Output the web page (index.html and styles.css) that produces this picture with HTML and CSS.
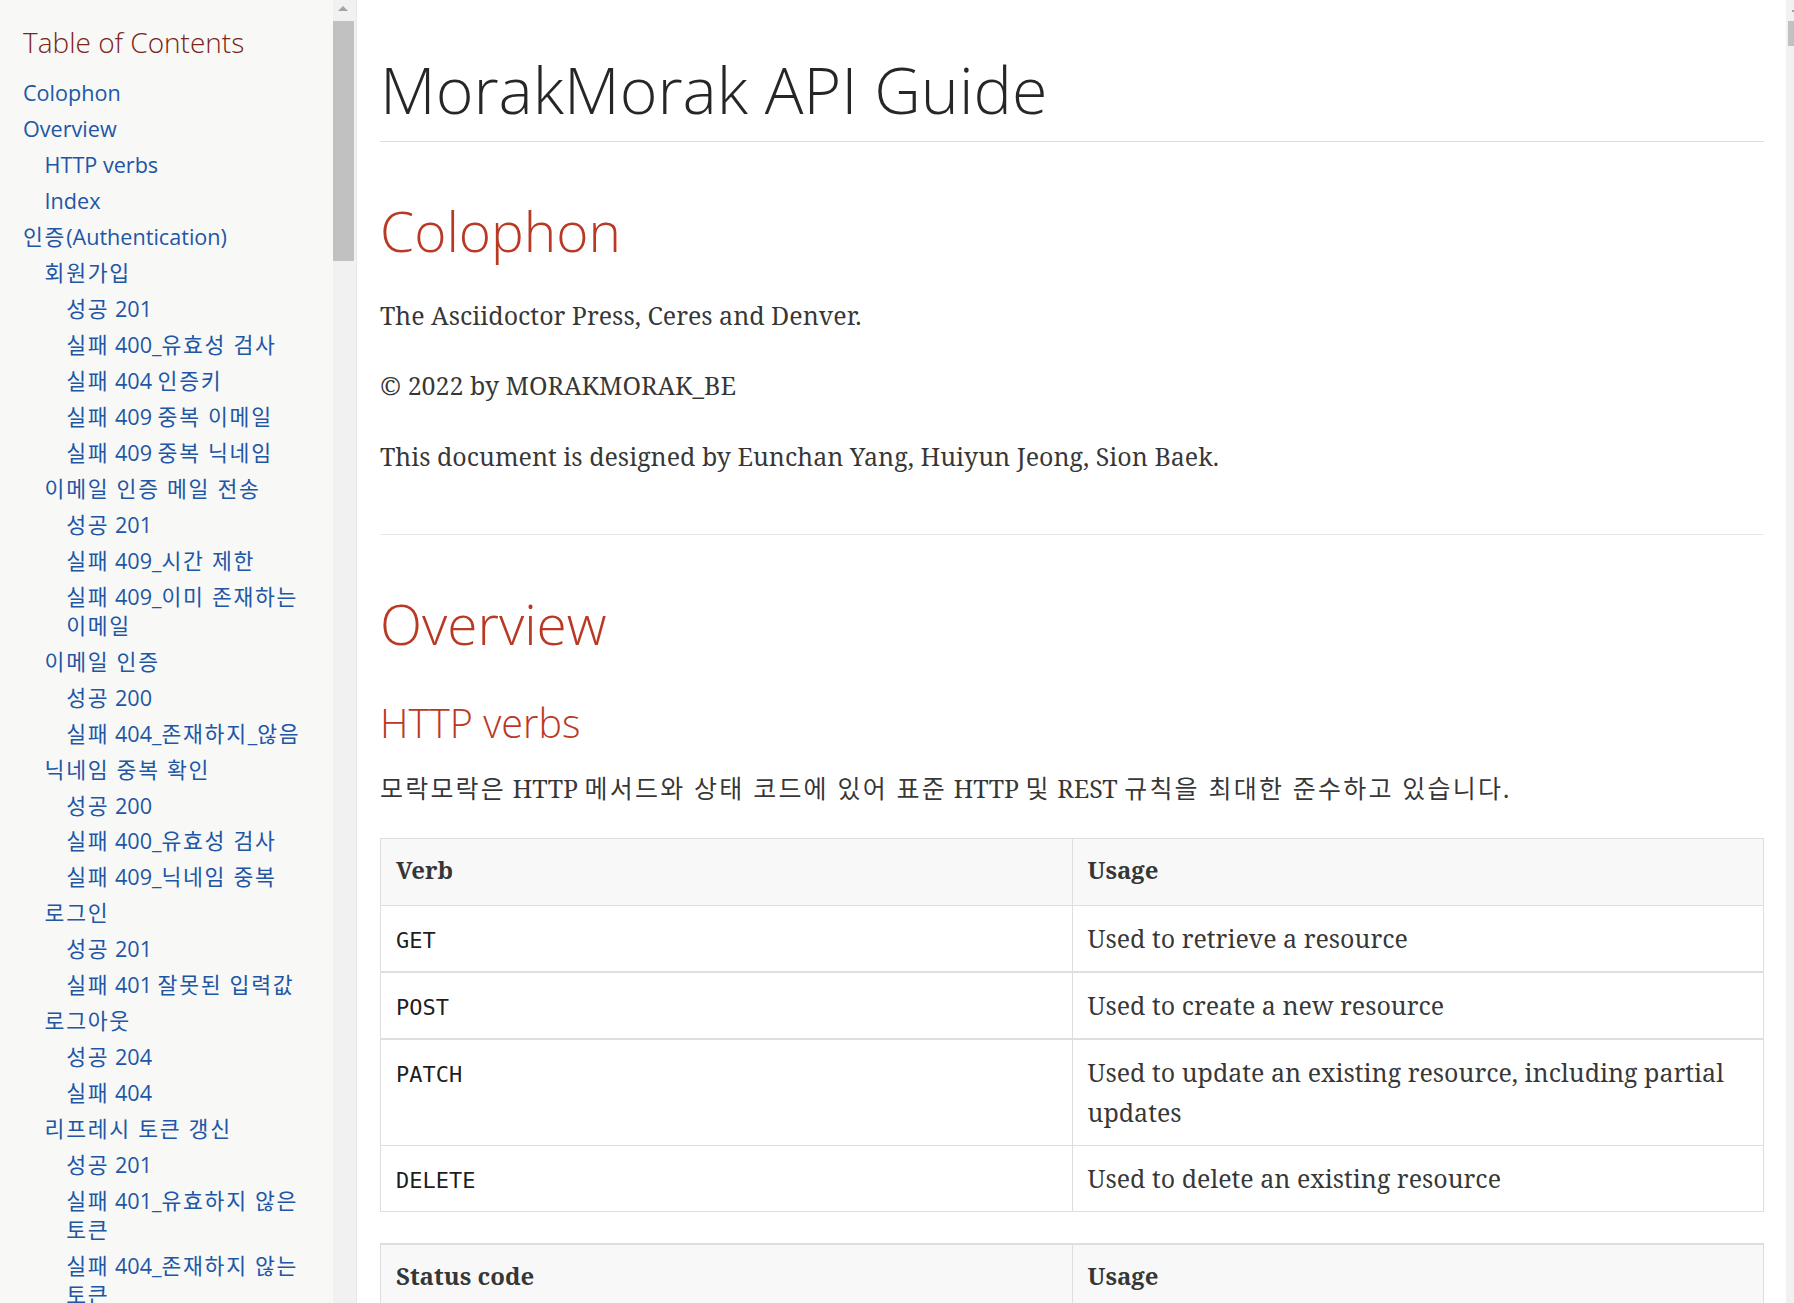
FILE: index.html
```html
<!DOCTYPE html>
<html lang="ko">
<head>
<meta charset="utf-8">
<title>MorakMorak API Guide</title>
<link rel="stylesheet" href="styles.css">
</head>
<body>
<div class="page">
  <aside class="toc">
    <div class="toc-inner">
      <div class="toctitle">Table of Contents</div>
      <ul class="sectlevel1">
        <li><a href="#_colophon">Colophon</a></li>
        <li><a href="#_overview">Overview</a>
          <ul class="sectlevel2">
            <li><a href="#_http_verbs">HTTP verbs</a></li>
            <li><a href="#_index">Index</a></li>
          </ul>
        </li>
        <li><a href="#_auth"><span class="ko">인증</span>(Authentication)</a>
          <ul class="sectlevel2">
            <li><a href="#_signup"><span class="ko">회원가입</span></a>
              <ul class="sectlevel3">
                <li><a href="#_s1"><span class="ko">성공</span> 201</a></li>
                <li><a href="#_s2"><span class="ko">실패</span> 400_<span class="ko">유효성 검사</span></a></li>
                <li><a href="#_s3"><span class="ko">실패</span> 404 <span class="ko">인증키</span></a></li>
                <li><a href="#_s4"><span class="ko">실패</span> 409 <span class="ko">중복 이메일</span></a></li>
                <li><a href="#_s5"><span class="ko">실패</span> 409 <span class="ko">중복 닉네임</span></a></li>
              </ul>
            </li>
            <li><a href="#_mail"><span class="ko">이메일 인증 메일 전송</span></a>
              <ul class="sectlevel3">
                <li><a href="#_m1"><span class="ko">성공</span> 201</a></li>
                <li><a href="#_m2"><span class="ko">실패</span> 409_<span class="ko">시간 제한</span></a></li>
                <li><a href="#_m3"><span class="ko">실패</span> 409_<span class="ko">이미 존재하는 이메일</span></a></li>
              </ul>
            </li>
            <li><a href="#_verify"><span class="ko">이메일 인증</span></a>
              <ul class="sectlevel3">
                <li><a href="#_v1"><span class="ko">성공</span> 200</a></li>
                <li><a href="#_v2"><span class="ko">실패</span> 404_<span class="ko">존재하지</span>_<span class="ko">않음</span></a></li>
              </ul>
            </li>
            <li><a href="#_nick"><span class="ko">닉네임 중복 확인</span></a>
              <ul class="sectlevel3">
                <li><a href="#_n1"><span class="ko">성공</span> 200</a></li>
                <li><a href="#_n2"><span class="ko">실패</span> 400_<span class="ko">유효성 검사</span></a></li>
                <li><a href="#_n3"><span class="ko">실패</span> 409_<span class="ko">닉네임 중복</span></a></li>
              </ul>
            </li>
            <li><a href="#_login"><span class="ko">로그인</span></a>
              <ul class="sectlevel3">
                <li><a href="#_l1"><span class="ko">성공</span> 201</a></li>
                <li><a href="#_l2"><span class="ko">실패</span> 401 <span class="ko">잘못된 입력값</span></a></li>
              </ul>
            </li>
            <li><a href="#_logout"><span class="ko">로그아웃</span></a>
              <ul class="sectlevel3">
                <li><a href="#_o1"><span class="ko">성공</span> 204</a></li>
                <li><a href="#_o2"><span class="ko">실패</span> 404</a></li>
              </ul>
            </li>
            <li><a href="#_refresh"><span class="ko">리프레시 토큰 갱신</span></a>
              <ul class="sectlevel3">
                <li><a href="#_r1"><span class="ko">성공</span> 201</a></li>
                <li><a href="#_r2"><span class="ko">실패</span> 401_<span class="ko">유효하지 않은 토큰</span></a></li>
                <li><a href="#_r3"><span class="ko">실패</span> 404_<span class="ko">존재하지 않는 토큰</span></a></li>
              </ul>
            </li>
          </ul>
        </li>
      </ul>
    </div>
    <div class="toc-scrollbar">
      <span class="sb-arrow"></span>
      <span class="sb-thumb"></span>
    </div>
  </aside>

  <main class="content">
    <header class="doc-header">
      <h1 class="doc-title">MorakMorak API Guide</h1>
    </header>

    <section class="sect1" id="_colophon">
      <h2>Colophon</h2>
      <p>The Asciidoctor Press, Ceres and Denver.</p>
      <p>© 2022 by MORAKMORAK_BE</p>
      <p>This document is designed by Eunchan Yang, Huiyun Jeong, Sion Baek.</p>
    </section>

    <section class="sect1" id="_overview">
      <h2>Overview</h2>
      <h3 id="_http_verbs">HTTP verbs</h3>
      <p class="para-ko"><span class="ko">모락모락은</span> HTTP <span class="ko">메서드와 상태 코드에 있어 표준</span> HTTP <span class="ko">및</span> REST <span class="ko">규칙을 최대한 준수하고 있습니다</span>.</p>

      <table class="doc-table">
        <colgroup><col class="half"><col class="half"></colgroup>
        <thead>
          <tr><th>Verb</th><th>Usage</th></tr>
        </thead>
        <tbody>
          <tr class="thick-bottom"><td><p class="cell-text"><code>GET</code></p></td><td><p class="cell-text">Used to retrieve a resource</p></td></tr>
          <tr class="thick-bottom"><td><p class="cell-text"><code>POST</code></p></td><td><p class="cell-text">Used to create a new resource</p></td></tr>
          <tr><td><p class="cell-text"><code>PATCH</code></p></td><td><p class="cell-text">Used to update an existing resource, including partial updates</p></td></tr>
          <tr><td><p class="cell-text"><code>DELETE</code></p></td><td><p class="cell-text">Used to delete an existing resource</p></td></tr>
        </tbody>
      </table>

      <table class="doc-table thick-top">
        <colgroup><col class="half"><col class="half"></colgroup>
        <thead>
          <tr><th>Status code</th><th>Usage</th></tr>
        </thead>
        <tbody>
          <tr><td><p class="cell-text"><code>200 OK</code></p></td><td><p class="cell-text">The request completed successfully</p></td></tr>
          <tr><td><p class="cell-text"><code>201 Created</code></p></td><td><p class="cell-text">A new resource has been created successfully</p></td></tr>
          <tr><td><p class="cell-text"><code>204 No Content</code></p></td><td><p class="cell-text">An update to an existing resource has been applied successfully</p></td></tr>
        </tbody>
      </table>
    </section>
  </main>

  <div class="page-scrollbar">
    <span class="psb-arrow"></span>
    <span class="psb-thumb"></span>
  </div>
</div>
</body>
</html>
```

FILE: styles.css
```css
html, body {
  margin: 0;
  padding: 0;
}

body {
  background: #fff;
  color: rgba(0, 0, 0, 0.8);
  font-family: "Noto Serif", "DejaVu Serif", "Noto Sans CJK KR", serif;
  overflow: hidden;
}

.page {
  display: flex;
  height: 1303px;
  overflow: hidden;
}

/* ---------- TOC sidebar ---------- */
.toc {
  flex: 0 0 357px;
  display: flex;
  box-sizing: border-box;
  background: #f8f8f7;
  border-right: 1px solid #e7e7e9;
}

.toc-inner {
  flex: 0 0 333px;
  box-sizing: border-box;
  padding: 24px 22px 0 23px;
  overflow: hidden;
  font-family: "Open Sans", "Noto Sans CJK KR", sans-serif;
  word-break: keep-all;
}

.toctitle {
  font-family: "Open Sans", "Noto Sans CJK KR", sans-serif;
  font-weight: 300;
  font-size: 28px;
  line-height: 36px;
  color: #7a2518;
  margin: 0 0 19px;
}

.toc-inner ul {
  list-style: none;
  margin: 0;
  padding: 0;
}

.toc-inner ul ul {
  margin-left: 21.6px;
}

.toc-inner li {
  font-size: 21.6px;
  line-height: 28.8px;
  margin-top: 7.2px;
}

.toc-inner a {
  color: #2156a5;
  text-decoration: none;
}

.toc-inner .ko {
  letter-spacing: 1.7px;
}

.toc-scrollbar {
  flex: 0 0 23px;
  display: flex;
  flex-direction: column;
  background: #f1f1f1;
}

.sb-arrow {
  display: block;
  width: 0;
  height: 0;
  margin: 6px 0 0 5px;
  border-left: 5px solid transparent;
  border-right: 5px solid transparent;
  border-bottom: 5px solid #a3a3a3;
}

.sb-thumb {
  display: block;
  width: 21px;
  height: 240px;
  margin-top: 10px;
  background: #c1c1c1;
}

/* ---------- Main content ---------- */
.content {
  flex: 1 1 auto;
  min-width: 0;
  padding: 0 22px 0 23px;
  overflow: hidden;
}

.doc-title {
  font-family: "Open Sans", "DejaVu Sans", sans-serif;
  font-weight: 300;
  font-size: 64.5px;
  line-height: 80px;
  color: rgba(0, 0, 0, 0.85);
  margin: 49px 0 0;
  padding-bottom: 12px;
  border-bottom: 1px solid #dddddf;
}

.sect1 {
  padding-bottom: 28px;
}

.sect1 + .sect1 {
  border-top: 1px solid #e7e7e9;
}

h2 {
  font-family: "Open Sans", "DejaVu Sans", sans-serif;
  font-weight: 300;
  font-size: 55px;
  line-height: 67px;
  color: #ba3925;
  margin: 55px 0 30.5px;
}

h3 {
  font-family: "Open Sans", "DejaVu Sans", sans-serif;
  font-weight: 300;
  font-size: 39.5px;
  line-height: 44.4px;
  color: #ba3925;
  margin: 43.5px 0 23px;
}

p {
  font-size: 25px;
  line-height: 40px;
  margin: 0 0 30.5px;
}

.para-ko .ko {
  letter-spacing: 2.2px;
}

/* ---------- Tables ---------- */
.doc-table {
  width: 100%;
  border-collapse: collapse;
  border: 1px solid #dedede;
  margin: 0 0 31px;
  table-layout: fixed;
}

.doc-table.thick-top {
  border-top-width: 2px;
}

.doc-table col.half {
  width: 50%;
}

.doc-table th,
.doc-table td {
  border: 1px solid #dedede;
  text-align: left;
  vertical-align: top;
  color: rgba(0, 0, 0, 0.8);
}

.doc-table tr.thick-bottom td {
  border-bottom-width: 2px;
}

.doc-table th {
  background: #f7f8f7;
  padding: 12px 15px 15px;
  font-size: 24px;
  line-height: 38.4px;
  font-weight: bold;
}

.doc-table td {
  padding: 12.5px 15px;
}

.cell-text {
  margin: 0;
}

.cell-text code {
  font-family: "DejaVu Sans Mono", "Liberation Mono", monospace;
  font-size: 22px;
  line-height: 1;
  color: rgba(0, 0, 0, 0.9);
}

/* ---------- Page scrollbar ---------- */
.page-scrollbar {
  flex: 0 0 8px;
  display: flex;
  flex-direction: column;
  align-items: flex-end;
  background: #f1f1f1;
}

.psb-arrow {
  display: block;
  width: 2px;
  height: 2px;
  margin-top: 10px;
  background: #a3a3a3;
}

.psb-thumb {
  display: block;
  width: 6px;
  height: 25px;
  margin-top: 9px;
  background: #c1c1c1;
}
```
